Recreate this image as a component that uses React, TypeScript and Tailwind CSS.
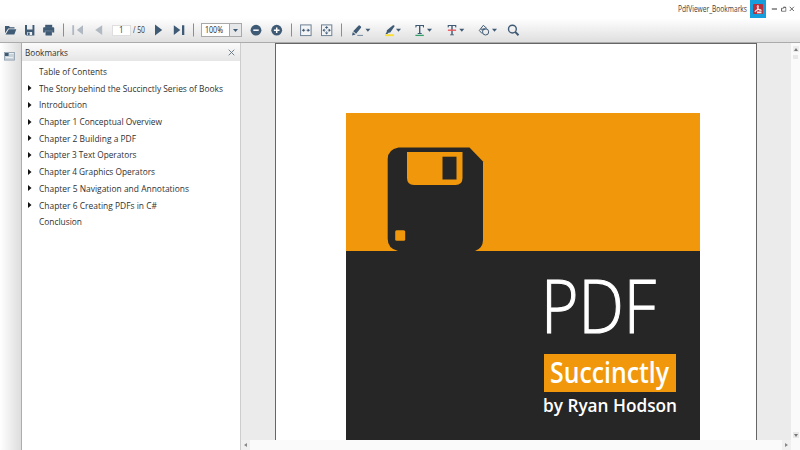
import { useLayoutEffect, useRef } from "react";
import type { ReactNode } from "react";

const INK = "#3f5a75";

/* A line of text condensed or widened to a given width. */
function Fit({ w, className = "", children }: { w: number; className?: string; children: string }) {
  const ref = useRef<HTMLSpanElement>(null);
  useLayoutEffect(() => {
    const el = ref.current;
    if (el) el.style.transform = `scaleX(${w / el.getBoundingClientRect().width})`;
    return () => {
      if (el) el.style.transform = "";
    };
  }, [w]);
  return (
    <span className="flex shrink-0" style={{ width: w }}>
      <span ref={ref} className={`block shrink-0 origin-left whitespace-nowrap ${className}`}>{children}</span>
    </span>
  );
}

/* Toolbar glyph: a slice of the toolbar that starts at x and is w wide. */
function Glyph({ x, w, children }: { x: number; w: number; children?: ReactNode }) {
  return (
    <svg width={w} height={24} viewBox={`${x} 18 ${w} 24`} fill={INK} className="block shrink-0">
      {children}
    </svg>
  );
}

const Sep = ({ x }: { x: number }) => <path d={`M${x} 23.5v13`} stroke="#8d8d8d" strokeWidth="1" fill="none" />;
const Caret = ({ x }: { x: number }) => <path d={`M${x} 28.7h5l-2.5 3z`} />;

function Toolbar() {
  return (
    <div className="flex h-6 shrink-0 items-center bg-linear-to-b from-white to-[#dfdfdf]">
      <Glyph x={0} w={20}>
        <path d="M5 33.3V26h4l1 1.3h4.5v1.2H8.2z" />
        <path d="M8.7 29.2h7.6l-2 5.2H5.6z" />
      </Glyph>
      <Glyph x={20} w={18}>
        <path d="M25 25h9.4v10.5H26.3L25 34.2z" />
        <path d="M27 25h5.5v4.6H27zM27.3 32h4.8v3h-4.8z" fill="#eef0f2" />
        <path d="M28 32.5h1.7v2.5H28z" />
      </Glyph>
      <Glyph x={38} w={22}>
        <path d="M45.2 24.8h7v3h-7z" />
        <path d="M44 27.2h9.3q.9 0 .9.9v4.3h-2v-.9h-7v.9h-2.1v-4.3q0-.9.9-.9z" />
        <path d="M45.5 31h6.4v4.5h-6.4z" />
        <path d="M44.5 30.9h8.4" stroke="#8292a3" strokeWidth=".6" />
      </Glyph>
      <Glyph x={60} w={28}>
        <Sep x={63.5} />
        <path d="M72.3 25.2h1.8v9.8h-1.8zM83 25.3v9.5l-6.2-4.8z" fill="#b0b9c2" />
      </Glyph>
      <Glyph x={88} w={24}>
        <path d="M102.2 25.2v9.8l-7-4.9z" fill="#b0b9c2" />
      </Glyph>
      <div className="flex h-[11px] w-[19px] items-center justify-center border border-[#dedede] bg-white text-[9px] leading-[10px] text-[#333]">
        <Fit w={4.5}>1</Fit>
      </div>
      <div className="ml-[2px] w-[17px] text-[9.5px] leading-[12px] text-[#333]">
        <Fit w={12}>/ 50</Fit>
      </div>
      <Glyph x={150} w={18}>
        <path d="M155 24.6v11l7.2-5.5z" />
      </Glyph>
      <Glyph x={168} w={33}>
        <path d="M173.8 25.2v9.8l6.5-4.9zM182 25.2h2.3v9.8H182z" />
        <Sep x={193.5} />
      </Glyph>
      <div className="flex h-[14px] w-[41px] shrink-0 items-center border border-[#a9a9a9] bg-white text-[9px] leading-[12px] text-[#222]">
        <div className="w-[27px] pl-[3px]">
          <Fit w={18}>100%</Fit>
        </div>
        <div className="flex h-full w-3 items-center justify-center border-l border-[#a9a9a9] bg-[#e6e7e8]">
          <svg width="5" height="3" fill={INK}>
            <path d="M0 0h5L2.5 3z" />
          </svg>
        </div>
      </div>
      <Glyph x={242} w={24}>
        <circle cx="256" cy="30.2" r="5.4" />
        <path d="M253.3 30.2h5.4" stroke="white" strokeWidth="1.5" />
      </Glyph>
      <Glyph x={266} w={30}>
        <circle cx="276.7" cy="30.2" r="5.4" />
        <path d="M273.9 30.2h5.6M276.7 27.4V33" stroke="white" strokeWidth="1.5" />
        <Sep x={291.5} />
      </Glyph>
      <Glyph x={296} w={20}>
        <rect x="300.6" y="24.9" width="10.5" height="10.7" fill="#f4f5f6" stroke="#6d8093" />
        <path d="M301.8 30.2l2.3-1.8v1.3h1.1v1h-1.1V32zM310 30.2l-2.3-1.8v1.3h-1.1v1h1.1V32z" />
      </Glyph>
      <Glyph x={316} w={32}>
        <rect x="321.5" y="24.9" width="10.3" height="10.7" fill="#f4f5f6" stroke="#6d8093" />
        <path d="M326.6 25.9l1.8 2.2h-3.6zM326.6 34.6l1.8-2.2h-3.6zM322.4 30.2l2.2-1.7v3.4zM330.9 30.2l-2.2-1.7v3.4z" />
        <path d="M326.6 28v1.2M326.6 31.3v1.2M324.5 30.2h1.1M327.7 30.2h1.1" stroke={INK} strokeWidth=".7" />
        <Sep x={341.5} />
      </Glyph>
      <Glyph x={348} w={30}>
        <path d="M352 35.5l.8-3.4 2.8 2.4zM353.2 31.3l5.2-5.6q.6-.6 1.3-.1l1.2 1q.6.5.1 1.2l-4.9 6z" />
        <path d="M357.3 35.4h5.7" stroke="#71869b" />
        <Caret x={365.4} />
      </Glyph>
      <Glyph x={378} w={32}>
        <path d="M393 25.3q1.6-.4 1.6 1l-4.3 6.2-1.8.2-1.2 1.3h-1.8l1.2-2.1.2-1.7z" />
        <path d="M385 35.2h8.8" stroke="#fade32" strokeWidth="1.9" />
        <Caret x={396} />
      </Glyph>
      <Glyph x={410} w={32}>
        <path d="M415.4 25h8.6v2.4h-.8l-.5-1.3h-2.3v7h1.3v.8h-4v-.8h1.3v-7h-2.3l-.5 1.3h-.8z" />
        <path d="M415.4 35.4h8.4" stroke="#35a169" strokeWidth="1.3" />
        <Caret x={427} />
      </Glyph>
      <Glyph x={442} w={32}>
        <path d="M447.7 25h8.6v2.4h-.8l-.5-1.3h-2.3V34.5h1.3v.8h-4v-.8h1.3V26.1H449l-.5 1.3h-.8z" />
        <path d="M447.9 30.2h8.2" stroke="#e9595e" strokeWidth="1.4" />
        <Caret x={459.3} />
      </Glyph>
      <Glyph x={474} w={28}>
        <g fill="none" stroke={INK} strokeWidth="1">
          <path d="M483.3 25.3l-4 5.2 2.8 3.1M483.3 25.3l3.6 3.2M480.7 29.2h5M484.4 28.1l-2.4 2.6" />
          <circle cx="485.6" cy="31.9" r="3.1" />
        </g>
        <Caret x={492} />
      </Glyph>
      <Glyph x={502} w={24}>
        <circle cx="512.4" cy="29.1" r="3.9" fill="none" stroke={INK} strokeWidth="1.4" />
        <path d="M515.2 31.9l3.3 3.4" stroke={INK} strokeWidth="2" />
      </Glyph>
    </div>
  );
}

const bookmarks: { label: string; width: number; leaf?: boolean }[] = [
  { label: "Table of Contents", width: 68, leaf: true },
  { label: "The Story behind the Succinctly Series of Books", width: 184 },
  { label: "Introduction", width: 48 },
  { label: "Chapter 1 Conceptual Overview", width: 123 },
  { label: "Chapter 2 Building a PDF", width: 97 },
  { label: "Chapter 3 Text Operators", width: 97.5 },
  { label: "Chapter 4 Graphics Operators", width: 116 },
  { label: "Chapter 5 Navigation and Annotations", width: 150 },
  { label: "Chapter 6 Creating PDFs in C#", width: 118 },
  { label: "Conclusion", width: 43, leaf: true },
];

function Bookmarks() {
  return (
    <div className="w-[218px] shrink-0 bg-white">
      <div className="flex h-[18px] items-center justify-between bg-linear-to-b from-[#fbfbfb] to-[#e6e6e6] pr-[5px] pl-[3px]">
        <Fit w={43} className="pt-[2px] text-[9.5px] leading-4 text-[#303030]">Bookmarks</Fit>
        <svg width="7" height="7" stroke="#667481" strokeWidth=".9" className="mt-px">
          <path d="M.7.7l5.6 5.6M6.3.7L.7 6.3" />
        </svg>
      </div>
      <div className="pt-[2.5px]">
        {bookmarks.map((b) => (
          <div key={b.label} className="flex h-[16.72px] items-center">
            <div className="w-[17px] pl-[6px]">
              {!b.leaf && (
                <svg width="4" height="6" className="mb-px block" fill="#111">
                  <path d="M0 0l3.5 3L0 6z" />
                </svg>
              )}
            </div>
            <Fit w={b.width} className="text-[9.5px] leading-[16px] text-[#303030]">{b.label}</Fit>
          </div>
        ))}
      </div>
    </div>
  );
}

function Cover() {
  return (
    <div className="flex h-[327px] w-[354px] flex-col bg-[#262626]">
      <div className="h-[138px] shrink-0 bg-[#f0970c]">
        <svg width="354" height="138" viewBox="346 113 354 138" className="block">
          <path d="M398.5 147.5H469.5L483 161.5V240Q483 248 475 251H398Q387.7 248.5 387.7 239V159Q387.7 149.5 398.5 147.5Z" fill="#262626" />
          <path d="M407 152h55.5v26q0 7-7 7H414q-7 0-7-7z" fill="#f0970c" />
          <path d="M442.5 156.7h14v22.8h-14z" fill="#262626" />
          <rect x="395.2" y="230.2" width="10" height="10.5" rx="1.5" fill="#f0970c" />
        </svg>
      </div>
      <div className="pt-[15px] pl-[195px]">
        <Fit w={115} className="text-[73px] leading-[77px] font-light text-white [-webkit-text-stroke:1.1px_white]">PDF</Fit>
      </div>
      <div className="mt-[11px] ml-[198px] flex h-[38px] w-[132px] shrink-0 items-center bg-[#f0970c] pb-[3px] pl-[6px]">
        <Fit w={119} className="text-[28px] leading-[34px] font-semibold text-white">Succinctly</Fit>
      </div>
      <div className="pl-[197px]">
        <Fit w={134} className="text-[18.5px] leading-[26px] font-semibold text-white">by Ryan Hodson</Fit>
      </div>
    </div>
  );
}

function TitleBar() {
  return (
    <div className="flex h-[18px] shrink-0 items-start bg-white pl-[678px]">
      <Fit w={69} className="text-[9px] leading-[18px] text-[#404040]">PdfViewer_Bookmarks</Fit>
      <svg width="53" height="18" viewBox="747 0 53 18" className="block shrink-0">
        <path d="M750 0h16v18h-16z" fill="#159edb" />
        <rect x="753" y="4" width="10" height="10" rx="1" fill="#b92f3a" />
        <path d="M758 5.5c-1.4 0-.6 2.4.2 3.4.9 1.1 2.2 2 3 1.6.9-.5-1-1.4-3.2-1-1.6.3-3.2 1.3-3 2 .3.8 2.1-.8 2.8-2.7.5-1.3 1-3.3.2-3.3z" fill="none" stroke="white" strokeWidth=".9" />
        <path d="M757 11.5h4.5v1.8H757z" fill="#eee" />
        <g fill="none" stroke="#555">
          <path d="M771.8 9h5.2" strokeWidth="1.2" />
          <path d="M783 7.5h2.8v3.8h-4.2V8.5M781.5 11v-2.7h2.2M783.5 7h2v1" strokeWidth=".7" />
          <path d="M789.7 6.8l4.2 4.2M793.9 6.8L789.7 11" strokeWidth=".9" />
        </g>
      </svg>
    </div>
  );
}

export default function App() {
  return (
    <div className="flex h-[450px] w-[800px] flex-col overflow-hidden bg-white font-['Open_Sans','Noto_Sans',sans-serif]">
      <TitleBar />
      <Toolbar />
      <div className="h-px shrink-0 bg-[#ababab]" />
      <div className="flex min-h-0 flex-1">
        <div className="w-[22px] shrink-0 border-r border-[#adadad] bg-linear-to-r from-white to-[#dddddd] pt-[9px] pl-1">
          <svg width="11" height="9" className="block">
            <rect x=".4" y=".4" width="10.2" height="7.7" fill="#c9d1d9" stroke="#8c9cac" strokeWidth=".8" />
            <path d="M1 1h3.6v3H1z" fill={INK} />
            <path d="M5.2 1.5h4.5M2 5.5h7" stroke="#eff2f5" strokeWidth=".9" />
          </svg>
        </div>
        <Bookmarks />
        <div className="flex min-w-0 flex-1 flex-col border-l border-[#cdcdcd]">
          <div className="flex min-h-0 flex-1">
            <div className="w-[550px] shrink-0 bg-[#ebebeb] pl-[34px]">
              <div className="h-[397px] w-[482px] border border-b-0 border-[#666] bg-white pt-[69px] pl-[70px]">
                <Cover />
              </div>
            </div>
            <div className="flex flex-1 flex-col items-center justify-between bg-[#fafafa] pt-[3px] pb-[2px]">
              <div className="flex flex-col items-center gap-[3px]">
                <div className="flex h-[6px] w-[6px] items-center justify-center bg-[#ececec]">
                  <svg width="4" height="3" fill="#777"><path d="M0 3l2-3 2 3z" /></svg>
                </div>
                <div className="h-[4px] w-[5px] bg-[#e7e7e7]" />
              </div>
              <div className="flex h-[6px] w-[6px] items-center justify-center bg-[#e8e8e8]">
                <svg width="4" height="3" fill="#777"><path d="M0 0h4L2 3z" /></svg>
              </div>
            </div>
          </div>
          <div className="flex h-[10px] shrink-0 justify-between bg-[#fafafa] pr-[9px]">
            <div className="flex w-[9px] items-center justify-center bg-[#f0f0f0]">
              <svg width="3" height="4" fill="#888"><path d="M3 0v4L0 2z" /></svg>
            </div>
            <div className="flex w-[9px] items-center justify-center bg-[#f0f0f0]">
              <svg width="3" height="4" fill="#888"><path d="M0 0v4l3-2z" /></svg>
            </div>
          </div>
        </div>
      </div>
    </div>
  );
}
